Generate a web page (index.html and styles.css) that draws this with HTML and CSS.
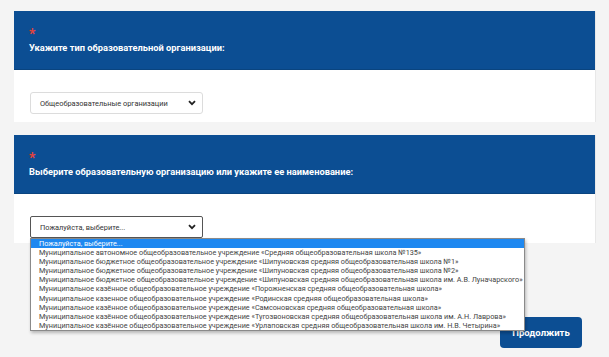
FILE: index.html
```html
<!DOCTYPE html>
<html lang="ru">
<head>
  <meta charset="UTF-8" />
  <meta name="viewport" content="width=device-width, initial-scale=1.0"/>
  <title>Выбор образовательной организации</title>
  <link rel="stylesheet" href="styles.css">
</head>
<body>
  <div class="card">
    <div class="card-head">
      <span class="req">*</span>
      <span class="title">Укажите тип образовательной организации:</span>
    </div>
    <div class="card-body">
      <div class="select">
        <span>Общеобразовательные организации</span>
        <svg class="chev" width="8" height="6" viewBox="0 0 8 6"><path d="M1 1.2 L4 4.2 L7 1.2" fill="none" stroke="#222" stroke-width="1.8"/></svg>
      </div>
    </div>
  </div>

  <div class="card">
    <div class="card-head">
      <span class="req">*</span>
      <span class="title">Выберите образовательную организацию или укажите ее наименование:</span>
    </div>
    <div class="card-body short">
      <div class="select-wrap">
        <div class="select focused">
          <span>Пожалуйста, выберите...</span>
          <svg class="chev" width="8" height="6" viewBox="0 0 8 6"><path d="M1 1.2 L4 4.2 L7 1.2" fill="none" stroke="#222" stroke-width="1.8"/></svg>
        </div>
        <ul class="options">
          <li class="active">Пожалуйста, выберите...</li>
          <li>Муниципальное автономное общеобразовательное учреждение «Средняя общеобразовательная школа №135»</li>
          <li>Муниципальное бюджетное общеобразовательное учреждение «Шипуновская средняя общеобразовательная школа №1»</li>
          <li>Муниципальное бюджетное общеобразовательное учреждение «Шипуновская средняя общеобразовательная школа №2»</li>
          <li>Муниципальное бюджетное общеобразовательное учреждение «Шипуновская средняя общеобразовательная школа им. А.В. Луначарского»</li>
          <li>Муниципальное казённое общеобразовательное учреждение «Порожненская средняя общеобразовательная школа»</li>
          <li>Муниципальное казенное общеобразовательное учреждение «Родинская средняя общеобразовательная школа»</li>
          <li>Муниципальное казённое общеобразовательное учреждение «Самсоновская средняя общеобразовательная школа»</li>
          <li>Муниципальное казённое общеобразовательное учреждение «Тугозвоновская средняя общеобразовательная школа им. А.Н. Лаврова»</li>
          <li>Муниципальное казённое общеобразовательное учреждение «Урлаповская средняя общеобразовательная школа им. Н.В. Четырина»</li>
        </ul>
      </div>
    </div>
  </div>

  <div class="actions">
    <button class="btn">Продолжить</button>
  </div>
</body>
</html>
```

FILE: styles.css
```css
body {
  margin: 0;
  padding: 11px 13px 0 14px;
  background-color: #f4f4f4;
  font-family: Roboto, "Liberation Sans", sans-serif;
}
.card {
  background-color: white;
  border-right: 1px solid #e8e8e8;
  margin-bottom: 13px;
}
.card-head {
  background-color: #0c4e93;
  height: 59px;
  padding-left: 15px;
  box-sizing: border-box;
  display: flex;
  flex-direction: column;
  justify-content: center;
  border-bottom: 1px solid #0a447f;
}
.req {
  color: #e8433b;
  font-weight: bold;
  font-size: 14px;
  line-height: 9px;
  height: 9px;
  margin-top: 4px;
}
.title {
  color: white;
  font-weight: bold;
  font-size: 9.3px;
  line-height: 13px;
  margin-top: 2px;
}
.card-body {
  padding: 22px 16px 8px;
}
.card-body.short {
  padding-bottom: 5px;
}
.select-wrap {
  position: relative;
  width: 173px;
}
.select {
  width: 173px;
  height: 22px;
  box-sizing: border-box;
  border: 1px solid #dcdcdc;
  border-radius: 3px;
  padding: 0 6px 0 9px;
  display: flex;
  align-items: center;
  justify-content: space-between;
  font-size: 7.4px;
  color: #333;
}
.select.focused {
  border-color: #555;
  border-radius: 2px;
}
.options {
  position: absolute;
  top: 22px;
  left: 0;
  margin: 0;
  padding: 0;
  list-style: none;
  background-color: white;
  border: 1px solid #8a8a8a;
  box-shadow: 1px 2px 3px rgba(0,0,0,0.25);
  font-size: 7.25px;
  color: #444;
  white-space: nowrap;
  z-index: 2;
}
.options li {
  height: 9.1px;
  line-height: 9px;
  padding: 0 1px 0 8px;
}
.options li.active {
  background-color: #1e88f0;
  color: white;
}
.actions {
  display: flex;
  justify-content: flex-end;
  padding: 61px 14px 0 0;
}
.btn {
  width: 82px;
  height: 31px;
  background-color: #0c4e93;
  color: white;
  border: none;
  border-radius: 4px;
  font-family: Roboto, "Liberation Sans", sans-serif;
  font-weight: bold;
  font-size: 9.5px;
}
```
